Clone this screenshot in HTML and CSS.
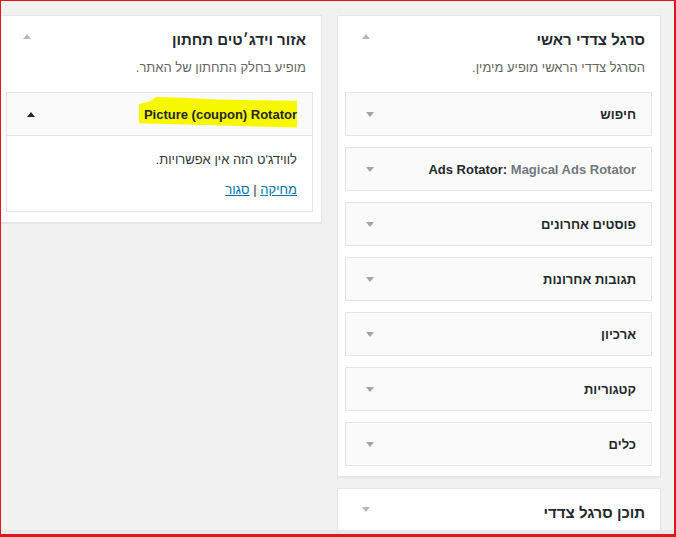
FILE: index.html
```html
<!DOCTYPE html>
<html lang="he" dir="rtl">
<head>
<meta charset="utf-8">
<title>ווידג'טים</title>
<link rel="stylesheet" href="styles.css">
</head>
<body>
<div class="frame">
  <div class="viewport">
    <div class="columns">
      <div class="col">
        <section class="sidebar">
          <div class="sidebar-head">
            <h2 class="sidebar-title">סרגל צדדי ראשי</h2>
            <span class="caret caret-up caret-light"></span>
          </div>
          <p class="sidebar-desc">הסרגל צדדי הראשי מופיע מימין.</p>
          <div class="widget"><div class="widget-top"><h3 class="widget-title">חיפוש</h3><span class="widget-toggle"><span class="caret caret-down"></span></span></div></div>
          <div class="widget"><div class="widget-top"><h3 class="widget-title">Ads Rotator: <span class="in-title">Magical Ads Rotator</span></h3><span class="widget-toggle"><span class="caret caret-down"></span></span></div></div>
          <div class="widget"><div class="widget-top"><h3 class="widget-title">פוסטים אחרונים</h3><span class="widget-toggle"><span class="caret caret-down"></span></span></div></div>
          <div class="widget"><div class="widget-top"><h3 class="widget-title">תגובות אחרונות</h3><span class="widget-toggle"><span class="caret caret-down"></span></span></div></div>
          <div class="widget"><div class="widget-top"><h3 class="widget-title">ארכיון</h3><span class="widget-toggle"><span class="caret caret-down"></span></span></div></div>
          <div class="widget"><div class="widget-top"><h3 class="widget-title">קטגוריות</h3><span class="widget-toggle"><span class="caret caret-down"></span></span></div></div>
          <div class="widget"><div class="widget-top"><h3 class="widget-title">כלים</h3><span class="widget-toggle"><span class="caret caret-down"></span></span></div></div>
        </section>
        <section class="sidebar closed">
          <div class="sidebar-head">
            <h2 class="sidebar-title">תוכן סרגל צדדי</h2>
            <span class="caret caret-down caret-light"></span>
          </div>
        </section>
      </div>
      <div class="col">
        <section class="sidebar">
          <div class="sidebar-head">
            <h2 class="sidebar-title">אזור וידג׳טים תחתון</h2>
            <span class="caret caret-up caret-light"></span>
          </div>
          <p class="sidebar-desc">מופיע בחלק התחתון של האתר.</p>
          <div class="widget open">
            <div class="widget-top"><h3 class="widget-title"><span class="hl">Picture (coupon) Rotator</span></h3><span class="widget-toggle"><span class="caret caret-up caret-dark"></span></span></div>
            <div class="widget-inside">
              <p class="no-options">לווידג'ט הזה אין אפשרויות.</p>
              <div class="widget-actions"><a href="#" class="link">מחיקה</a> | <a href="#" class="link">סגור</a></div>
            </div>
          </div>
        </section>
      </div>
    </div>
  </div>
  <div class="strip"></div>
</div>
</body>
</html>
```
FILE: styles.css
```css
* { box-sizing: border-box; }
html, body { margin: 0; padding: 0; }
body {
  background: #f1f1f1;
  font-family: "Liberation Sans", Arial, sans-serif;
  font-size: 13px;
  color: #23282d;
}
.frame {
  width: 676px;
  height: 537px;
  border-style: solid;
  border-color: #e3161d;
  border-width: 1px 2px 3px 1px;
  background: #f1f1f1;
  display: flex;
  flex-direction: column;
}
.viewport {
  height: 529px;
  overflow: hidden;
  direction: rtl;
}
.strip {
  height: 4px;
  background: #e9e9e9;
}
.columns {
  display: flex;
  direction: rtl;
  gap: 15px;
  padding: 14px 13px 0 0;
}
.col {
  width: 324px;
  flex: 0 0 324px;
  display: flex;
  flex-direction: column;
  gap: 11px;
}
.sidebar {
  background: #fff;
  border: 1px solid #e5e5e5;
  box-shadow: 0 1px 1px rgba(0,0,0,.04);
  padding: 0 8px 10px 7px;
}
.sidebar.closed { padding-bottom: 20px; }
.sidebar-head {
  display: flex;
  align-items: flex-start;
  padding: 14px 7px 0 17px;
}
.sidebar-title {
  margin: 0;
  flex: 1;
  font-size: 15px;
  line-height: 20px;
  font-weight: bold;
  color: #23282d;
}
.sidebar-desc {
  margin: 8px 0 15px;
  padding: 0 7px 0 0;
  line-height: 19px;
  color: #666;
}
.caret {
  display: block;
  width: 0;
  height: 0;
  border-left: 4px solid transparent;
  border-right: 4px solid transparent;
}
.caret-up { border-bottom: 5px solid #a0a5aa; }
.caret-down { border-top: 5px solid #a0a5aa; }
.sidebar-head .caret { margin-top: 4px; }
.caret-light.caret-up { border-bottom-color: #b4b9be; }
.caret-light.caret-down { border-top-color: #b4b9be; }
.caret-dark.caret-up { border-bottom-color: #23282d; }
.widget {
  background: #fafafa;
  border: 1px solid #e5e5e5;
  margin-bottom: 11px;
}
.widget:last-child { margin-bottom: 0; }
.widget-top {
  display: flex;
  align-items: center;
  height: 42px;
}
.widget-title {
  margin: 0;
  flex: 1;
  padding: 0 15px 0 0;
  font-size: 13px;
  font-weight: bold;
  color: #23282d;
  white-space: nowrap;
}
.in-title { color: #72777c; }
.widget-toggle {
  width: 47px;
  display: flex;
  justify-content: center;
  align-items: center;
}
.widget.open .widget-top { border-bottom: 1px solid #e5e5e5; height: 43px; }
.widget-inside {
  background: #fff;
  padding: 1px 15px 12px;
}
.no-options {
  margin: 13px 0 11px;
  line-height: 19px;
  color: #32373c;
}
.widget-actions {
  line-height: 19px;
  color: #32373c;
}
.link { color: #0073aa; text-decoration: underline; }
.hl {
  position: relative;
  z-index: 0;
}
.hl::before {
  content: "";
  position: absolute;
  z-index: -1;
  top: -10px;
  bottom: -6px;
  left: -5px;
  right: 0;
  background: #f7f700;
  clip-path: polygon(0 24%, 6% 18%, 11% 2%, 28% 4%, 50% 10%, 75% 12%, 100% 14%, 100% 100%, 70% 96%, 40% 92%, 0 86%);
}
```
